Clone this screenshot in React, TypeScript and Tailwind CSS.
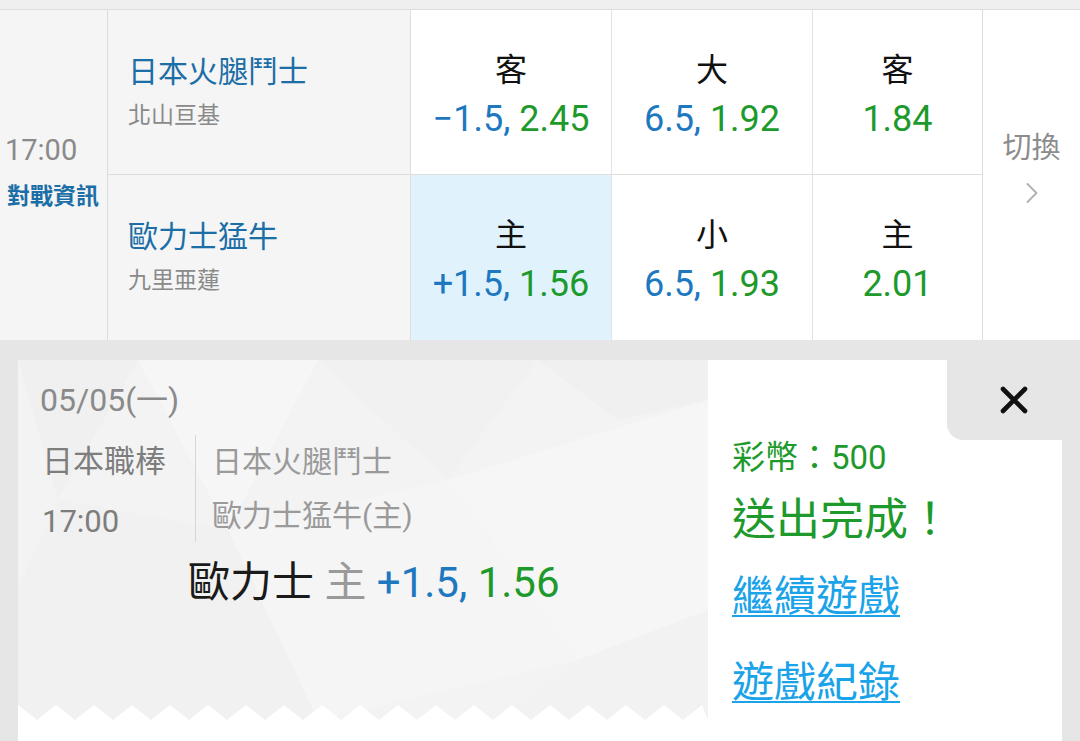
import React from 'react'
import { ChevronRight } from 'lucide-react'

const teams = [
  {
    name: '日本火腿鬥士',
    pitcher: '北山亘基',
    odds: [
      { label: '客', line: '−1.5,', price: '2.45' },
      { label: '大', line: '6.5,', price: '1.92' },
      { label: '客', line: '', price: '1.84' }
    ]
  },
  {
    name: '歐力士猛牛',
    pitcher: '九里亜蓮',
    odds: [
      { label: '主', line: '+1.5,', price: '1.56', picked: true },
      { label: '小', line: '6.5,', price: '1.93' },
      { label: '主', line: '', price: '2.01' }
    ]
  }
]

const oddsWidths = ['w-[201px]', 'w-[201px]', 'w-[169px]']

const Backdrop = () => (
  <svg className="absolute inset-0 h-full w-full" viewBox="0 0 690 360" preserveAspectRatio="none">
    <rect width="690" height="360" fill="#f3f3f3" />
    <polygon points="0,0 120,0 40,140" fill="#f0f0f0" />
    <polygon points="120,0 300,0 210,170" fill="#f6f6f6" />
    <polygon points="40,140 210,170 90,360 0,360 0,230" fill="#f1f1f1" />
    <polygon points="300,0 520,0 430,120" fill="#f1f1f1" />
    <polygon points="430,120 690,40 690,250 560,300" fill="#f6f6f6" />
    <polygon points="520,0 690,0 690,40 600,60" fill="#f0f0f0" />
    <polygon points="210,170 430,120 560,300 300,360" fill="#f5f5f5" />
    <polygon points="90,360 210,170 300,360" fill="#f1f1f1" />
    <polygon points="560,300 690,250 690,360 480,360" fill="#f2f2f2" />
  </svg>
)

const Zigzag = () => {
  const pts: string[] = []
  for (let x = 0; x <= 690; x += 19) {
    pts.push(`${x},${(x / 19) % 2 === 0 ? 0 : 15}`)
  }
  return (
    <svg className="absolute bottom-0 left-0 h-[15px] w-[690px]" viewBox="0 0 690 15">
      <polygon points={`${pts.join(' ')} 690,15 0,15`} fill="#ffffff" />
    </svg>
  )
}

export default function App() {
  return (
    <div className="h-[741px] w-[1080px] overflow-hidden bg-[#e6e6e6] font-[Roboto,'Noto_Sans_CJK_TC',sans-serif]">
      <div className="h-[10px] border-b border-[#dddddd] bg-[#efefef]" />

      <div className="flex h-[330px]">
        <div className="w-[108px] border-r border-[#dcdcdc] bg-[#f5f5f5] pl-[5px] pt-[122px]">
          <div className="text-[29px] leading-[36px] text-[#8a8a8a]">17:00</div>
          <div className="ml-[2px] mt-[14px] text-[23px] font-semibold leading-[30px] text-[#1b6ea6]">對戰資訊</div>
        </div>

        <div className="flex flex-col">
          {teams.map((t, i) => (
            <div key={i} className={`flex h-[165px] ${i === 0 ? 'border-b border-[#dedede]' : ''}`}>
              <div className="w-[303px] border-r border-[#dedede] bg-[#f5f5f5] pl-[20px] pt-[42px]">
                <div className="text-[30px] leading-[40px] text-[#1b6ea6]">{t.name}</div>
                <div className="mt-[10px] text-[23px] leading-[28px] text-[#8a8a8a]">{t.pitcher}</div>
              </div>
              {t.odds.map((o, j) => (
                <div
                  key={j}
                  className={`${oddsWidths[j]} ${j < 2 ? 'border-r border-[#dde3ea]' : ''} ${
                    o.picked ? 'bg-[#e0f3fd]' : 'bg-white'
                  } pt-[40px] text-center`}
                >
                  <div className="text-[32px] leading-[40px] text-[#111111]">{o.label}</div>
                  <div className="mt-[8px] text-[36px] leading-[42px]">
                    {o.line && <span className="text-[#1e78c0]">{o.line} </span>}
                    <span className="text-[#1d9a2b]">{o.price}</span>
                  </div>
                </div>
              ))}
            </div>
          ))}
        </div>

        <div className="flex flex-1 flex-col items-center border-l border-[#dcdcdc] bg-white pt-[120px]">
          <div className="text-[29px] leading-[36px] text-[#8c8c8c]">切換</div>
          <ChevronRight className="mt-[9px] h-[36px] w-[36px] text-[#b0b0b0]" strokeWidth={1.2} />
        </div>
      </div>

      <div className="ml-[18px] mr-[18px] mt-[20px] flex h-[381px] bg-white">
        <div className="w-[690px]">
          <div className="relative h-[360px]">
            <Backdrop />
            <Zigzag />
            <div className="relative pl-[22px] pt-[22px]">
              <div className="text-[32px] leading-[36px] text-[#8a8a8a]">05/05(一)</div>
              <div className="mt-[17px] flex items-start">
                <div className="w-[155px] pl-[2px] pt-[9px] text-[31px] leading-[36px] text-[#7d7d7d]">
                  <div>日本職棒</div>
                  <div className="mt-[24px]">17:00</div>
                </div>
                <div className="border-l border-[#d6d6d6] pb-[8px] pl-[16px] pt-[9px] text-[30px] leading-[36px] text-[#9a9a9a]">
                  <div>日本火腿鬥士</div>
                  <div className="mt-[18px]">歐力士猛牛(主)</div>
                </div>
              </div>
              <div className="ml-[148px] mt-[15px] text-[42px] leading-[52px]">
                <span className="text-[#1a1a1a]">歐力士</span>
                <span className="text-[#9a9a9a]"> 主 </span>
                <span className="text-[#1e78c0]">+1.5, </span>
                <span className="text-[#1d9a2b]">1.56</span>
              </div>
            </div>
          </div>
        </div>

        <div className="relative flex-1 pl-[24px] pt-[78px]">
          <div className="absolute right-0 top-0 flex h-[80px] w-[115px] items-center justify-center rounded-bl-[16px] bg-[#e6e6e6] pl-[18px]">
            <svg width="28" height="28" viewBox="0 0 28 28">
              <path d="M3 3 L25 25 M25 3 L3 25" stroke="#111111" strokeWidth="4.6" strokeLinecap="round" />
            </svg>
          </div>
          <div className="text-[33px] leading-[40px] text-[#1d9a2b]">彩幣：500</div>
          <div className="mt-[16px] text-[44px] leading-[52px] text-[#1d9a2b]">送出完成！</div>
          <div className="mt-[26px] text-[42px] leading-[50px] text-[#1aa3e8] underline decoration-2 underline-offset-[4px]">繼續遊戲</div>
          <div className="mt-[36px] text-[42px] leading-[50px] text-[#1aa3e8] underline decoration-2 underline-offset-[4px]">遊戲紀錄</div>
        </div>
      </div>
    </div>
  )
}
